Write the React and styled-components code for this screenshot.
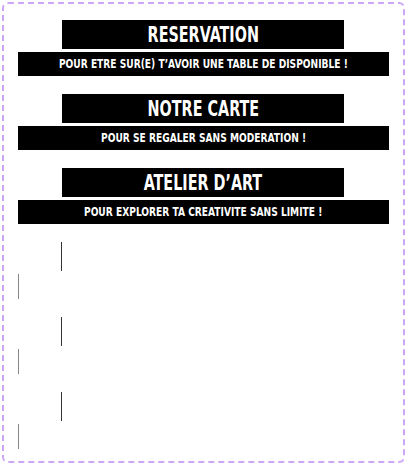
import React from 'react';
import styled, { createGlobalStyle } from 'styled-components';

const GlobalStyle = createGlobalStyle`
  html, body {
    margin: 0;
    padding: 0;
    background: #fff;
  }
  body {
    font-family: "DejaVu Sans Condensed", "DejaVu Sans", sans-serif;
  }
`;

// --- Cadre ---
const Frame = styled.div`
  box-sizing: border-box;
  margin: 2px;
  width: 403px;
  height: 461px;
  border: 2px dashed #cda6f8;
  border-radius: 6px;
  padding-top: 16px;
  display: flex;
  flex-direction: column;
  gap: 18px;
`;

const Block = styled.div`
  display: flex;
  flex-direction: column;
  align-items: flex-start;
  gap: 3px;
`;

const Title = styled.h2`
  box-sizing: border-box;
  margin: 0 0 0 ${p => (p.$empty ? 57 : 58)}px;
  width: ${p => (p.$empty ? '1px' : '282px')};
  height: 29px;
  background: ${p => (p.$empty ? '#333' : '#000')};
  color: #fff;
  font-size: 21px;
  font-weight: 700;
  line-height: 30px;
  text-align: center;
  overflow: hidden;
  white-space: nowrap;
`;

const Subtitle = styled.p`
  box-sizing: border-box;
  margin: 0 0 0 14px;
  width: ${p => (p.$empty ? '1px' : '371px')};
  height: ${p => (p.$empty ? '25px' : '24px')};
  background: ${p => (p.$empty ? '#888' : '#000')};
  color: #fff;
  font-size: 12.5px;
  font-weight: 700;
  line-height: 24px;
  text-align: center;
  overflow: hidden;
  white-space: nowrap;
`;

// police condensée : on resserre les lettres
const Squeeze = styled.span`
  display: inline-block;
  text-transform: uppercase;
  transform: scaleX(${p => p.$x});
`;

const sections = [
  { title: 'Reservation', text: "Pour etre sur(e) t'avoir une table de disponible !" },
  { title: 'Notre carte', text: 'Pour se regaler sans moderation !' },
  { title: "Atelier d'art", text: 'Pour explorer ta creativite sans limite !' },
  { title: '', text: '' },
  { title: '', text: '' },
  { title: '', text: '' },
];

const App = () => {
  return (
    <>
      <GlobalStyle />
      <Frame>
        {sections.map((s, i) => (
          <Block key={i}>
            <Title $empty={!s.title}>
              {s.title && <Squeeze $x={0.76}>{s.title.replace("'", '\u2019')}</Squeeze>}
            </Title>
            <Subtitle $empty={!s.text}>
              {s.text && <Squeeze $x={0.81}>{s.text.replace("'", '\u2019')}</Squeeze>}
            </Subtitle>
          </Block>
        ))}
      </Frame>
    </>
  );
};

export default App;
